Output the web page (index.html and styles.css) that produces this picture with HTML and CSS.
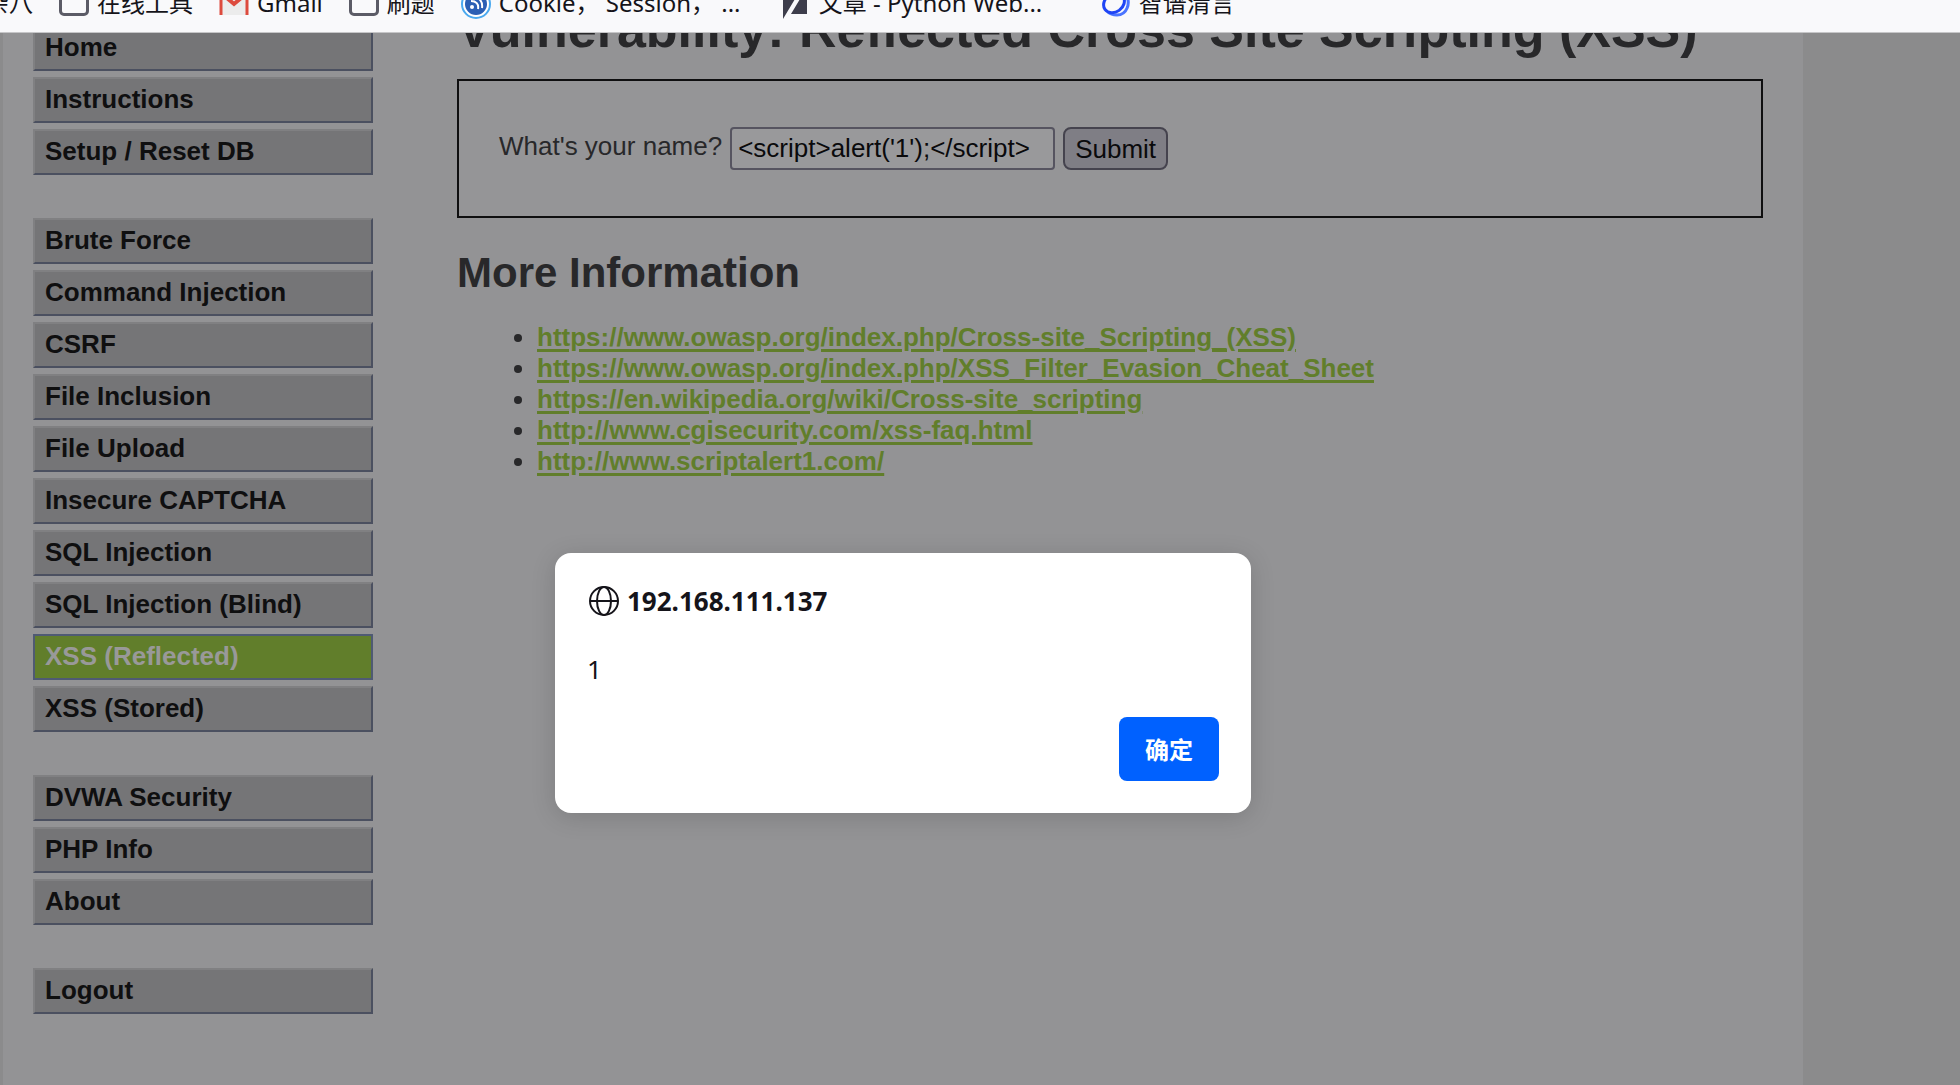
FILE: index.html
```html
<!DOCTYPE html>
<html lang="en">
<head>
    <meta charset="UTF-8">
    <meta name="viewport" content="width=device-width, initial-scale=1.0">
    <title>Vulnerability: Reflected Cross Site Scripting (XSS)</title>
    <link rel="stylesheet" href="styles.css">
</head>
<body>
    <!-- Bookmarks toolbar -->
    <nav class="bookmarks" lang="zh-CN">
        <div class="bookmark-list">
            <a href="#" class="bookmark first"><span class="title">杂八</span></a>
            <a href="#" class="bookmark"><span class="folder"></span><span class="title">在线工具</span></a>
            <a href="#" class="bookmark">
                <svg class="icon" viewBox="0 0 30 32">
                    <path d="M2 6h26v22H2z" fill="#ececec"/>
                    <path d="M2 28V7M28 28V7" stroke="#dd4b3e" stroke-width="3"/>
                    <path d="M2 6l13 11L28 6" fill="none" stroke="#dd4b3e" stroke-width="4"/>
                </svg>
                <span class="title">Gmail</span>
            </a>
            <a href="#" class="bookmark"><span class="folder"></span><span class="title">刷题</span></a>
            <a href="#" class="bookmark">
                <svg class="icon" viewBox="0 0 30 32">
                    <circle cx="15" cy="17" r="14" fill="#fff" stroke="#4ba9ef" stroke-width="2"/>
                    <circle cx="15" cy="17" r="11" fill="#2b5fb4"/>
                    <circle cx="11" cy="20" r="2" fill="#fff"/>
                    <path d="M10 14c5 0 8 3 7 8M11 10c7 0 11 4 10 11" fill="none" stroke="#fff" stroke-width="2"/>
                </svg>
                <span class="title clipped">Cookie， Session， ...</span>
            </a>
            <a href="#" class="bookmark">
                <svg class="icon" viewBox="0 0 30 32">
                    <path d="M2 2h18L2 32zM26 2v25H10L25 2z" fill="#3d3d4b"/>
                </svg>
                <span class="title clipped">文章 - Python Web...</span>
            </a>
            <a href="#" class="bookmark">
                <svg class="icon" viewBox="0 0 30 32">
                    <path d="M25 8c5 8 1 20-9 20-4 0-7-1-9-3" fill="none" stroke="#4a74ff" stroke-width="3"/>
                    <ellipse cx="13" cy="16" rx="11" ry="9" transform="rotate(-35 13 16)" fill="none" stroke="#1f45f5" stroke-width="3"/>
                </svg>
                <span class="title">智谱清言</span>
            </a>
        </div>
    </nav>

    <div class="page">
        <div class="container">
            <nav class="main-menu">
                <ul>
                    <li><a href="#">Home</a></li>
                    <li><a href="#">Instructions</a></li>
                    <li><a href="#">Setup / Reset DB</a></li>
                </ul>
                <ul>
                    <li><a href="#">Brute Force</a></li>
                    <li><a href="#">Command Injection</a></li>
                    <li><a href="#">CSRF</a></li>
                    <li><a href="#">File Inclusion</a></li>
                    <li><a href="#">File Upload</a></li>
                    <li><a href="#">Insecure CAPTCHA</a></li>
                    <li><a href="#">SQL Injection</a></li>
                    <li><a href="#">SQL Injection (Blind)</a></li>
                    <li><a href="#" class="selected">XSS (Reflected)</a></li>
                    <li><a href="#">XSS (Stored)</a></li>
                </ul>
                <ul>
                    <li><a href="#">DVWA Security</a></li>
                    <li><a href="#">PHP Info</a></li>
                    <li><a href="#">About</a></li>
                </ul>
                <ul>
                    <li><a href="#">Logout</a></li>
                </ul>
            </nav>

            <main class="main-body">
                <h1>Vulnerability: Reflected Cross Site Scripting (XSS)</h1>

                <form class="vulnerable-area">
                    <label for="name">What's your name?</label>
                    <input type="text" id="name" name="name" value="&lt;script&gt;alert('1');&lt;/script&gt;">
                    <button type="submit">Submit</button>
                </form>

                <h2>More Information</h2>
                <ul class="links">
                    <li><a href="https://www.owasp.org/index.php/Cross-site_Scripting_(XSS)">https://www.owasp.org/index.php/Cross-site_Scripting_(XSS)</a></li>
                    <li><a href="https://www.owasp.org/index.php/XSS_Filter_Evasion_Cheat_Sheet">https://www.owasp.org/index.php/XSS_Filter_Evasion_Cheat_Sheet</a></li>
                    <li><a href="https://en.wikipedia.org/wiki/Cross-site_scripting">https://en.wikipedia.org/wiki/Cross-site_scripting</a></li>
                    <li><a href="http://www.cgisecurity.com/xss-faq.html">http://www.cgisecurity.com/xss-faq.html</a></li>
                    <li><a href="http://www.scriptalert1.com/">http://www.scriptalert1.com/</a></li>
                </ul>
            </main>
        </div>
    </div>

    <!-- Alert box -->
    <div class="alert" role="alertdialog" aria-labelledby="alertHost" aria-describedby="alertText">
        <div class="alert-host">
            <svg class="globe" viewBox="-2 -1 32 32">
                <g fill="none" stroke="#15141a" stroke-width="2">
                    <circle cx="15" cy="15" r="14"/>
                    <ellipse cx="15" cy="15" rx="7" ry="14"/>
                    <path d="M1 15h28"/>
                </g>
            </svg>
            <span id="alertHost">192.168.111.137</span>
        </div>
        <p class="alert-text" id="alertText">1</p>
        <button class="alert-ok" type="button" lang="zh-CN">确定</button>
    </div>
</body>
</html>
```

FILE: styles.css
```css
* {
    margin: 0;
    padding: 0;
    box-sizing: border-box;
}

body {
    height: 100vh;
    display: flex;
    flex-direction: column;
    overflow: hidden;
    background-color: #8b8b8c;
    color: #28282a;
    font-family: Arial, "Liberation Sans", sans-serif;
    font-size: 26px;
    line-height: 30px;
}

ul {
    list-style: none;
}

/* Bookmarks toolbar, scrolled half out of view */
.bookmarks {
    flex: none;
    height: 33px;
    overflow: hidden;
    background-color: #f9f9fb;
    border-bottom: 1px solid #c6c6c8;
    font-family: "Noto Sans", "Noto Sans CJK SC", sans-serif;
    font-size: 24px;
    line-height: 36px;
}

.bookmark-list {
    display: flex;
    gap: 26px;
    margin-top: -15px;
}

.bookmark {
    display: flex;
    align-items: center;
    gap: 8px;
    color: #15141a;
    text-decoration: none;
    white-space: nowrap;
}

.first {
    margin-left: -15px;
}

.clipped {
    width: 256px;
}

.folder {
    width: 30px;
    height: 26px;
    border: 3px solid #5b5b66;
    border-radius: 5px;
}

.icon {
    width: 30px;
    height: 32px;
}

/* Page */
.page {
    flex: 1;
    overflow: hidden;
    padding-left: 3px;
}

.container {
    display: flex;
    max-width: 1800px;
    min-height: 100%;
    background-color: #939395;
}

.main-menu {
    width: 370px;
    margin-top: -8px;
    padding-left: 30px;
    display: flex;
    flex-direction: column;
    gap: 43px;
}

.main-menu ul {
    display: flex;
    flex-direction: column;
    gap: 6px;
}

.main-menu a {
    display: block;
    padding: 5px 10px 7px;
    background-color: #757577;
    border: 2px solid #808082;
    border-right-color: #4b5060;
    border-bottom-color: #4b5060;
    color: #0f0f10;
    font-weight: bold;
    text-decoration: none;
}

.main-menu .selected {
    background-color: #617e2b;
    border-color: #4f5a73;
    color: #999999;
}

.main-body {
    flex: 1;
    margin-top: -34px;
    padding: 0 40px 0 84px;
}

h1 {
    font-size: 52px;
    line-height: 60px;
    margin-bottom: 20px;
}

h2 {
    font-size: 42px;
    line-height: 48px;
    margin: 31px 0 25px;
}

.vulnerable-area {
    display: flex;
    align-items: flex-start;
    gap: 8px;
    padding: 46px 40px;
    background-color: #959597;
    border: 2px solid #0f0f10;
}

.vulnerable-area label {
    line-height: 38px;
}

.vulnerable-area input {
    width: 325px;
    height: 43px;
    padding: 0 6px;
    background-color: #99999b;
    border: 2px solid #565460;
    border-radius: 4px;
    color: #0a0a0c;
    font: inherit;
}

.vulnerable-area button {
    height: 43px;
    padding: 0 10px;
    background-color: #7f7e85;
    border: 2px solid #45434e;
    border-radius: 8px;
    color: #0a0a0c;
    font: inherit;
}

.links {
    padding-left: 80px;
    list-style: disc;
    line-height: 31px;
}

.links a {
    color: #617e2b;
    font-weight: bold;
    text-decoration-thickness: 3px;
    text-underline-offset: 3px;
}

/* Alert box */
.alert {
    position: absolute;
    top: 553px;
    left: 555px;
    width: 696px;
    padding: 30px 32px 32px;
    display: flex;
    flex-direction: column;
    background-color: #ffffff;
    border-radius: 16px;
    box-shadow: 0 4px 24px rgba(0, 0, 0, 0.15);
    color: #15141a;
    font-family: "Noto Sans", "Noto Sans CJK SC", sans-serif;
    line-height: 36px;
}

.alert-host {
    display: flex;
    align-items: center;
    gap: 8px;
    font-weight: bold;
}

.globe {
    width: 32px;
    height: 32px;
}

.alert-text {
    margin: 32px 0 30px;
}

.alert-ok {
    align-self: flex-end;
    width: 100px;
    height: 64px;
    padding-bottom: 2px;
    background-color: #0061ff;
    border: none;
    border-radius: 8px;
    color: #ffffff;
    font-family: inherit;
    font-size: 24px;
    font-weight: bold;
}
```
